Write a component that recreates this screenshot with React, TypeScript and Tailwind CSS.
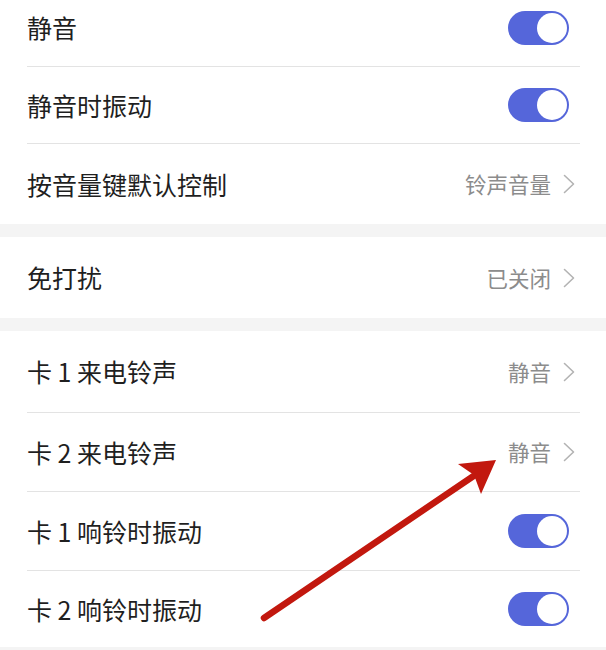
import React from 'react';

type Row =
  | { label: string; kind: 'toggle'; h: string }
  | { label: string; kind: 'link'; value: string; h: string };

const groups: Row[][] = [
  [
    { label: '静音', kind: 'toggle', h: 'h-[77px]' },
    { label: '静音时振动', kind: 'toggle', h: 'h-[76px]' },
    { label: '按音量键默认控制', kind: 'link', value: '铃声音量', h: 'h-[80px]' },
  ],
  [{ label: '免打扰', kind: 'link', value: '已关闭', h: 'h-[81px]' }],
  [
    { label: '卡 1 来电铃声', kind: 'link', value: '静音', h: 'h-[81px]' },
    { label: '卡 2 来电铃声', kind: 'link', value: '静音', h: 'h-[78px]' },
    { label: '卡 1 响铃时振动', kind: 'toggle', h: 'h-[78px]' },
    { label: '卡 2 响铃时振动', kind: 'toggle', h: 'h-[76px]' },
  ],
];

function Toggle() {
  return (
    <div className="w-[61px] h-[34px] rounded-full bg-[#5566da] flex items-center justify-end pr-[2px]">
      <div className="w-[30px] h-[30px] rounded-full bg-white" />
    </div>
  );
}

function Chevron() {
  return (
    <svg width="12" height="20" viewBox="0 0 12 20" fill="none">
      <path d="M1.5 1.5 L10.5 10 L1.5 18.5" stroke="#b3b3b3" strokeWidth="1.6" strokeLinecap="round" strokeLinejoin="round" />
    </svg>
  );
}

function SettingRow({ row }: { row: Row }) {
  return (
    <div className={`${row.h} flex items-center justify-between pl-[27px] pr-[37px]`}>
      <span className="text-[25px] leading-none text-[#1f1f1f]">{row.label}</span>
      {row.kind === 'toggle' ? (
        <Toggle />
      ) : (
        <div className="flex items-center gap-[12px] -mr-[6px]">
          <span className="text-[21.5px] leading-none text-[#8c8c8c]">{row.value}</span>
          <Chevron />
        </div>
      )}
    </div>
  );
}

export default function App() {
  return (
    <div
      className="relative w-[606px] h-[650px] overflow-hidden bg-[#f4f4f4]"
      style={{ fontFamily: '"Noto Sans CJK SC", "Noto Sans", sans-serif' }}
    >
      <div className="-mt-[11px] flex flex-col gap-[13px]">
        {groups.map((g, gi) => (
          <div key={gi} className="bg-white flex flex-col">
            {g.map((row, ri) => (
              <React.Fragment key={ri}>
                {ri > 0 && <div className="mx-[27px] mr-[26px] h-px bg-[#e3e3e3]" />}
                <SettingRow row={row} />
              </React.Fragment>
            ))}
          </div>
        ))}
      </div>

      {/* annotation arrow */}
      <svg className="absolute inset-0 pointer-events-none" width="606" height="650" viewBox="0 0 606 650">
        <line x1="264" y1="618" x2="478" y2="473" stroke="#c2180e" strokeWidth="6.5" strokeLinecap="round" />
        <polygon points="496,460 458,464 474,475 481,494" fill="#c2180e" />
      </svg>
    </div>
  );
}
